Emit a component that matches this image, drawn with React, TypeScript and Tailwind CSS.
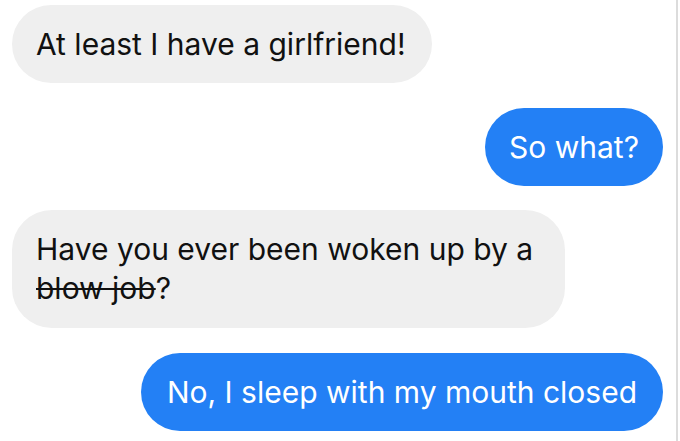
export default function App() {
  return (
    <div
      className="w-[680px] h-[441px] bg-white overflow-hidden flex text-[30px] leading-[39px]"
      style={{ fontFamily: 'Inter, "Noto Sans", sans-serif' }}
    >
      <div className="w-[676px] flex flex-col pt-[5px]">
        <div className="self-start ml-[12px] w-[420px] h-[78px] rounded-full bg-[#efefef] text-[#111] flex items-center px-[24px]">
          At least I have a girlfriend!
        </div>
        <div className="self-end mr-[13px] mt-[25px] w-[178px] h-[78px] rounded-full bg-[#2380f5] text-white flex items-center justify-center">
          So what?
        </div>
        <div className="self-start ml-[12px] mt-[24px] w-[553px] h-[118px] rounded-[40px] bg-[#efefef] text-[#111] flex flex-col justify-center px-[24px]">
          <span>Have you ever been woken up by a</span>
          <span>
            <span className="line-through decoration-2">blow job</span>?
          </span>
        </div>
        <div className="self-end mr-[13px] mt-[25px] w-[522px] h-[78px] rounded-full bg-[#2380f5] text-white flex items-center justify-center">
          No, I sleep with my mouth closed
        </div>
      </div>
      <div className="w-[2px] h-full bg-[#dcdcdc]" />
    </div>
  );
}
